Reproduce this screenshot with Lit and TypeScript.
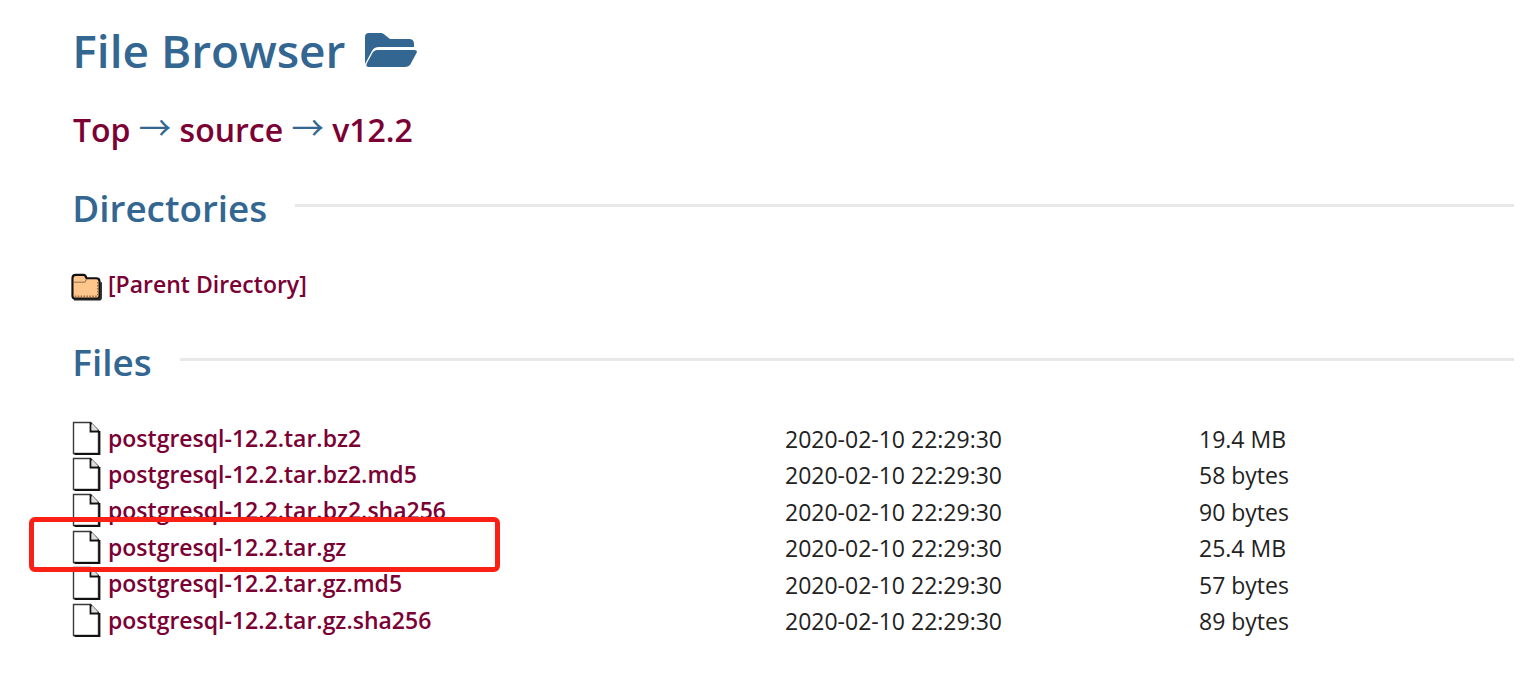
import { LitElement, html, css, svg } from "lit";
import { customElement } from "lit/decorators.js";

const files = [
  ["postgresql-12.2.tar.bz2", "19.4 MB"],
  ["postgresql-12.2.tar.bz2.md5", "58 bytes"],
  ["postgresql-12.2.tar.bz2.sha256", "90 bytes"],
  ["postgresql-12.2.tar.gz", "25.4 MB"],
  ["postgresql-12.2.tar.gz.md5", "57 bytes"],
  ["postgresql-12.2.tar.gz.sha256", "89 bytes"],
];

const fileIcon = svg`<svg class="ficon" width="30" height="34" viewBox="0 0 30 34">
  <path d="M1.5 1.5H18.5L26.500 9.500V32.500H1.500Z" fill="#fff" stroke="#3a3a3a" stroke-width="1.4"/>
  <path d="M18.500 1.500V10.500H27" fill="none" stroke="#111" stroke-width="1.800"/>
  <path d="M20 2.500L26 9H20Z" fill="#dedede"/>
  <path d="M27.500 10V33H2.500" fill="none" stroke="#111" stroke-width="1.800"/>
</svg>`;

const folderIcon = svg`<svg class="dicon" width="31" height="28" viewBox="0 0 32 28">
  <path d="M1.500 5Q1.500 1.500 5 1.500H13Q15 1.500 16 5H26Q29.500 5 29.500 8.500V23Q29.500 26 26.500 26H4.500Q1.500 26 1.500 23Z" fill="#ffc68c" stroke="#111" stroke-width="2.200"/>
  <path d="M3 9H14.500L16 6" fill="none" stroke="#8a6a45" stroke-width="1"/>
  <path d="M4 23.500H27.500M27.500 9V23" fill="none" stroke="#9b6c3c" stroke-width="1.400" stroke-dasharray="1.500 1.500"/>
  <path d="M3 27H29Q31 27 31 25V9" fill="none" stroke="#222" stroke-width="1.800"/>
</svg>`;

@customElement("app-root")
export class AppRoot extends LitElement {
  static styles = css`
    :host {
      display: block;
      position: relative;
      width: 1524px;
      height: 684px;
      overflow: hidden;
      background: #fff;
      font-family: "Open Sans", "Noto Sans", sans-serif;
      color: #222;
    }
    .page {
      display: flex;
      flex-direction: column;
      padding: 20px 10px 0 73px;
    }
    h1 {
      margin: 0 0 0 -0.7px;
      display: flex;
      align-items: center;
      gap: 19px;
      height: 60px;
      font-size: 46px;
      line-height: 60px;
      font-weight: 600;
      color: #336791;
    }
    .crumbs {
      margin-top: 26.5px;
      height: 46px;
      font-size: 32px;
      line-height: 46px;
      font-weight: 600;
      color: #336791;
      white-space: nowrap;
    }
    a {
      color: #7b0034;
      text-decoration: none;
      font-weight: 600;
    }
    .arrow {
      font-family: "Noto Sans CJK SC", sans-serif;
      font-weight: 400;
      font-size: 32.4px;
      line-height: 1;
      position: relative;
      top: -2px;
    }
    h2 {
      margin: 0 0 0 -0.7px;
      display: flex;
      align-items: center;
      gap: 28px;
      height: 48px;
      font-size: 36.8px;
      line-height: 48px;
      font-weight: 600;
      color: #336791;
    }
    h2::after {
      content: "";
      flex: 1;
      height: 3px;
      margin-top: -6px;
      background: #e8e8e8;
    }
    h2.dirs { margin-top: 31.5px; }
    h2.files { margin-top: 33.4px; }
    .parent {
      margin-top: 37px;
      display: flex;
      align-items: flex-start;
      height: 36px;
      font-size: 23px;
      line-height: 30px;
    }
    .icon-slot {
      width: 36px;
      flex: none;
      margin-left: -1px;
    }
    .rows {
      margin-top: 36.3px;
      display: grid;
      grid-template-columns: 712px 414px 1fr;
      grid-auto-rows: 36.4px;
      font-size: 23px;
      line-height: 30px;
    }
    .name { display: flex; align-items: flex-start; white-space: nowrap; }
    .cell { padding-top: 1.4px; }
    svg { display: block; }
    .ficon { margin-top: -2px; }
    .dicon { margin: 4px 0 0 -1px; }
    .hl {
      position: absolute;
      left: 29px;
      top: 517px;
      width: 471px;
      height: 55px;
      box-sizing: border-box;
      border: 5px solid #fb2015;
      border-radius: 6px;
    }
  `;

  render() {
    return html`
      <div class="page">
        <h1>
          File Browser
          <svg width="54" height="36" viewBox="0 0 54 36">
            <path d="M1 32V5Q1 1 5 1H17Q19 1 21 3L26 7H45Q50 7 50 12V15H15Q10 15 8 19L1 32Z" fill="#336791"/>
            <path d="M13 18H50Q54 18 52.500 21L46 33Q44 35 41 35H5Q1 35 3 31L9 20Q11 18 13 18Z" fill="#336791"/>
          </svg>
        </h1>
        <div class="crumbs">
          <a href="#">Top</a> <span class="arrow">→</span> <a href="#">source</a> <span class="arrow">→</span> <a href="#">v12.2</a>
        </div>
        <h2 class="dirs">Directories</h2>
        <div class="parent">
          <div class="icon-slot">${folderIcon}</div>
          <a href="#">[Parent Directory]</a>
        </div>
        <h2 class="files">Files</h2>
        <div class="rows">
          ${files.map(
            ([n, s]) => html`
              <div class="name">
                <div class="icon-slot">${fileIcon}</div>
                <a href="#">${n}</a>
              </div>
              <div class="cell">2020-02-10 22:29:30</div>
              <div class="cell">${s}</div>
            `
          )}
        </div>
      </div>
      <div class="hl"></div>
    `;
  }
}
